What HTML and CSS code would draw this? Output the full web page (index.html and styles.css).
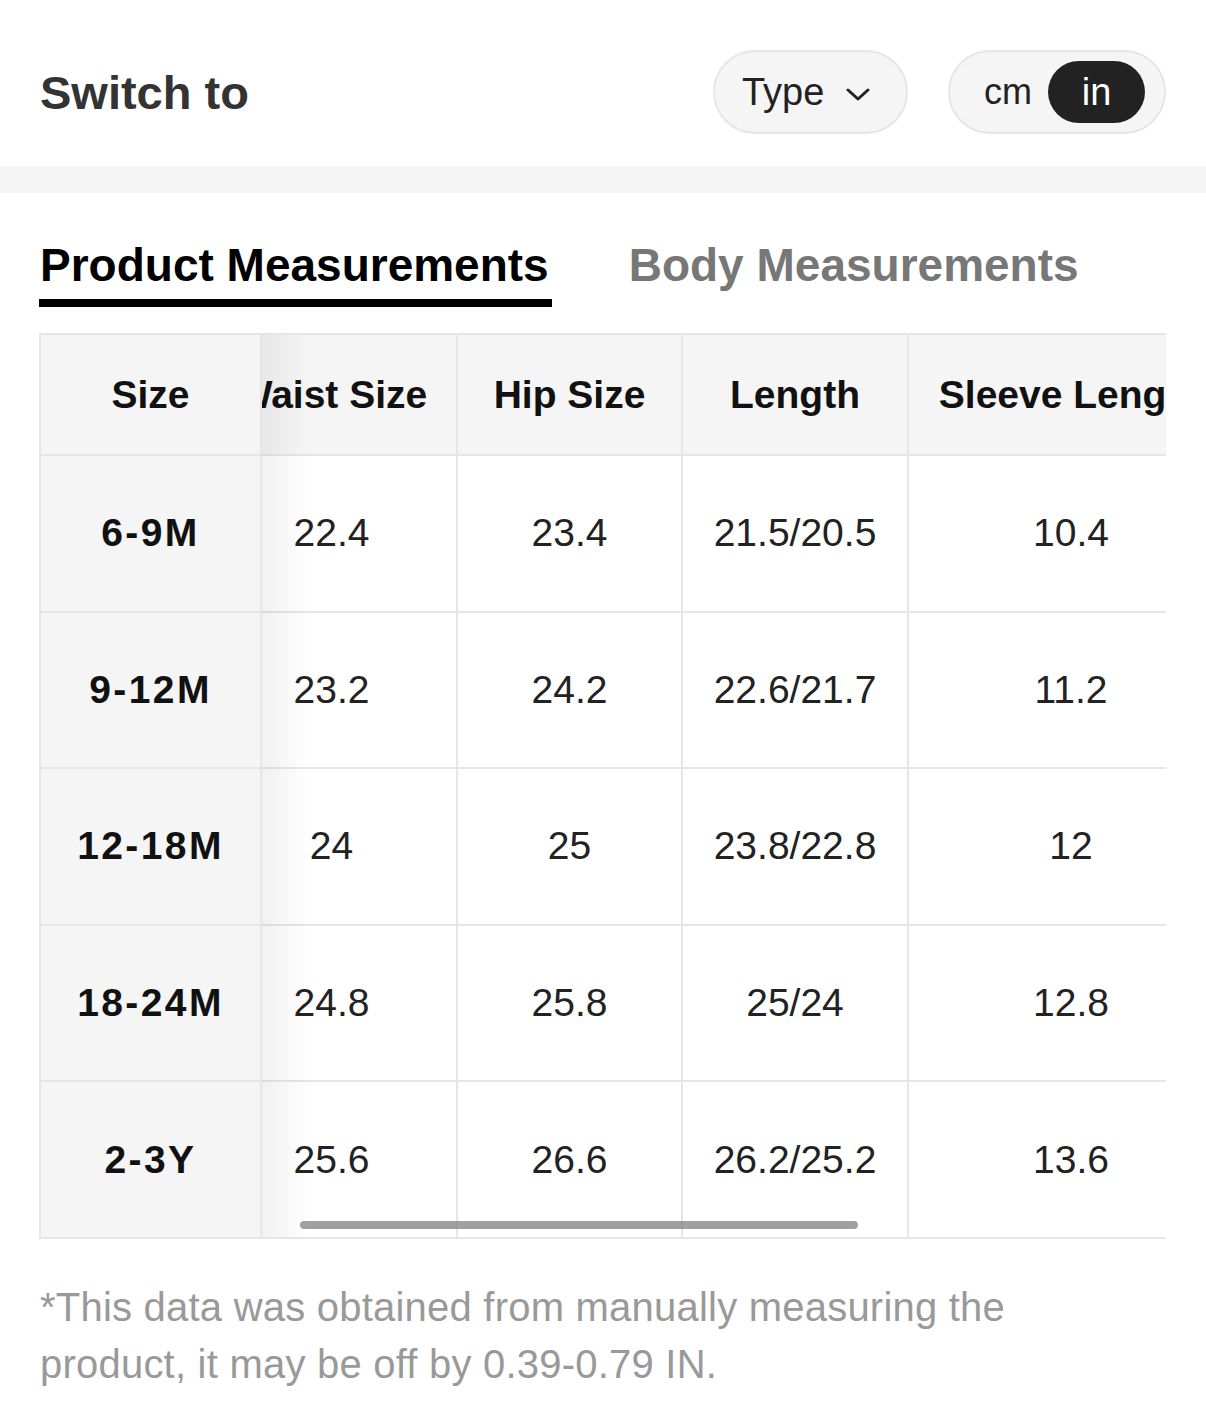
FILE: index.html
```html
<!DOCTYPE html>
<html lang="en">
<head>
<meta charset="utf-8">
<title>Size Guide</title>
<link rel="stylesheet" href="styles.css">
</head>
<body>
<header class="top">
  <h1 class="title">Switch to</h1>
  <div class="controls">
    <button class="type-pill">Type
      <svg class="chev" width="24" height="14" viewBox="0 0 24 14"><path d="M2 2 L12 11 L22 2" fill="none" stroke="#222" stroke-width="3" stroke-linecap="round" stroke-linejoin="round"/></svg>
    </button>
    <div class="unit-pill">
      <span class="unit">cm</span>
      <span class="unit unit-active">in</span>
    </div>
  </div>
</header>
<div class="band"></div>
<nav class="tabs">
  <span class="tab tab-active">Product Measurements</span>
  <span class="tab">Body Measurements</span>
</nav>
<section class="table">
  <div class="fixed-col">
    <div class="cell head">Size</div>
    <div class="cell row">6-9M</div>
    <div class="cell row">9-12M</div>
    <div class="cell row">12-18M</div>
    <div class="cell row">18-24M</div>
    <div class="cell row">2-3Y</div>
  </div>
  <div class="scroll">
    <div class="grid">
      <div class="cell head">Waist Size</div>
      <div class="cell head">Hip Size</div>
      <div class="cell head">Length</div>
      <div class="cell head">Sleeve Length</div>

      <div class="cell row">22.4</div>
      <div class="cell row">23.4</div>
      <div class="cell row">21.5/20.5</div>
      <div class="cell row">10.4</div>

      <div class="cell row">23.2</div>
      <div class="cell row">24.2</div>
      <div class="cell row">22.6/21.7</div>
      <div class="cell row">11.2</div>

      <div class="cell row">24</div>
      <div class="cell row">25</div>
      <div class="cell row">23.8/22.8</div>
      <div class="cell row">12</div>

      <div class="cell row">24.8</div>
      <div class="cell row">25.8</div>
      <div class="cell row">25/24</div>
      <div class="cell row">12.8</div>

      <div class="cell row">25.6</div>
      <div class="cell row">26.6</div>
      <div class="cell row">26.2/25.2</div>
      <div class="cell row">13.6</div>
    </div>
    <div class="shadow"></div>
  </div>
  <div class="scrollbar"></div>
</section>
<p class="note">*This data was obtained from manually measuring the product, it may be off by 0.39-0.79 IN.</p>
</body>
</html>
```

FILE: styles.css
```css
* { box-sizing: border-box; }
html, body { margin: 0; padding: 0; background: #fff; }
body {
  font-family: "Liberation Sans", Arial, sans-serif;
  color: #222;
  width: 1206px;
}

.top {
  height: 166px;
  padding: 50px 40px 32px 40px;
  display: flex;
  align-items: center;
  justify-content: space-between;
}
.title {
  margin: 0;
  font-size: 47px;
  font-weight: 700;
  color: #333;
  line-height: 1;
}
.controls {
  display: flex;
  align-items: center;
  gap: 40px;
}
.type-pill {
  height: 84px;
  width: 195px;
  border: 2px solid #e6e6e6;
  border-radius: 42px;
  background: #f5f5f5;
  font-family: inherit;
  font-size: 38px;
  color: #222;
  display: flex;
  align-items: center;
  padding: 0 0 0 27px;
  gap: 22px;
}
.chev { margin-top: 6px; }
.unit-pill {
  height: 84px;
  width: 218px;
  border: 2px solid #e6e6e6;
  border-radius: 42px;
  background: #f5f5f5;
  display: flex;
  align-items: center;
  padding: 0 19px 0 34px;
  justify-content: space-between;
}
.unit {
  font-size: 36px;
  color: #222;
}
.unit-active {
  width: 97px;
  height: 62px;
  border-radius: 31px;
  background: #222;
  color: #fff;
  font-size: 38px;
  display: flex;
  align-items: center;
  justify-content: center;
}

.band {
  height: 27px;
  background: #f5f5f5;
}

.tabs {
  display: flex;
  gap: 80px;
  padding: 44px 40px 0 40px;
  height: 140px;
}
.tab {
  font-size: 46px;
  font-weight: 700;
  color: #777;
  line-height: 56px;
  height: 56px;
}
.tab-active {
  color: #000;
  position: relative;
}
.tab-active::after {
  content: "";
  position: absolute;
  left: -1px;
  right: -3px;
  top: 62px;
  height: 8px;
  background: #000;
}

.table {
  position: relative;
  margin-left: 39px;
  width: 1127px;
  display: flex;
  border-top: 2px solid #e6e6e6;
  border-bottom: 2px solid #e6e6e6;
}
.cell {
  display: flex;
  align-items: center;
  justify-content: center;
  white-space: nowrap;
  font-size: 39px;
}
.cell.head {
  height: 119px;
  background: #f5f5f5;
  font-weight: 700;
  color: #111;
}
.cell.row {
  height: 156.6px;
  border-top: 2px solid #e6e6e6;
  color: #222;
}
.fixed-col {
  width: 223px;
  flex: none;
  border-left: 2px solid #e6e6e6;
  border-right: 2px solid #e6e6e6;
  background: #f5f5f5;
}
.fixed-col .cell.row {
  font-weight: 700;
  color: #111;
  letter-spacing: 2.4px;
  background: #f5f5f5;
}
.scroll {
  flex: 1;
  overflow: hidden;
  position: relative;
}
.grid {
  display: grid;
  grid-template-columns: 251px 225px 226px 326px;
  margin-left: -55px;
  width: 1028px;
}
.grid .cell {
  border-right: 2px solid #e6e6e6;
}
.shadow {
  position: absolute;
  left: 0;
  top: 0;
  bottom: 0;
  width: 48px;
  background: linear-gradient(to right, rgba(0, 0, 0, 0.055), rgba(0, 0, 0, 0));
  pointer-events: none;
}
.scrollbar {
  position: absolute;
  left: 261px;
  width: 558px;
  bottom: 8px;
  height: 8px;
  border-radius: 4px;
  background: rgba(120, 120, 120, 0.7);
}

.note {
  margin: 40px 0 0 40px;
  width: 1020px;
  font-size: 40px;
  letter-spacing: 0.22px;
  line-height: 57px;
  color: #999;
}
```
